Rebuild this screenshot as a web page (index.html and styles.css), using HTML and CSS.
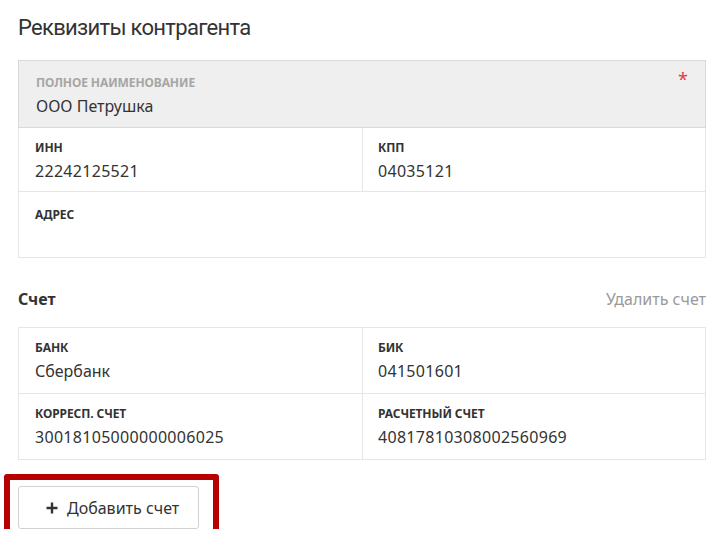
FILE: index.html
```html
<!DOCTYPE html>
<html lang="ru">
<head>
<meta charset="utf-8">
<link rel="stylesheet" href="styles.css">
</head>
<body>
<div class="page">
  <h1 class="title">Реквизиты контрагента</h1>

  <div class="card">
    <div class="row row-gray">
      <div class="cell">
        <div class="label label-muted">Полное наименование</div>
        <div class="value">ООО Петрушка</div>
      </div>
      <span class="req">*</span>
    </div>
    <div class="row row-split row-short">
      <div class="cell">
        <div class="label">ИНН</div>
        <div class="value num">22242125521</div>
      </div>
      <div class="cell">
        <div class="label">КПП</div>
        <div class="value num">04035121</div>
      </div>
    </div>
    <div class="row row-address">
      <div class="cell">
        <div class="label">Адрес</div>
        <div class="value">&nbsp;</div>
      </div>
    </div>
  </div>

  <div class="section-head">
    <span class="section-title">Счет</span>
    <span class="section-link">Удалить счет</span>
  </div>

  <div class="card">
    <div class="row row-split">
      <div class="cell">
        <div class="label">Банк</div>
        <div class="value">Сбербанк</div>
      </div>
      <div class="cell">
        <div class="label">БИК</div>
        <div class="value num">041501601</div>
      </div>
    </div>
    <div class="row row-split">
      <div class="cell">
        <div class="label">Корресп. счет</div>
        <div class="value num">30018105000000006025</div>
      </div>
      <div class="cell">
        <div class="label">Расчетный счет</div>
        <div class="value num">40817810308002560969</div>
      </div>
    </div>
  </div>

  <div class="btn-wrap">
    <button class="btn" type="button">
      <svg class="plus" width="12" height="12" viewBox="0 0 12 12"><path d="M6 0.5V11.5M0.5 6H11.5" stroke="#333" stroke-width="2.4" fill="none"/></svg>
      <span>Добавить счет</span>
    </button>
    <div class="highlight"></div>
  </div>
</div>
</body>
</html>
```

FILE: styles.css
```css
* { box-sizing: border-box; }
html, body { margin: 0; padding: 0; background: #fff; }
body {
  font-family: "Noto Sans", "Open Sans", "DejaVu Sans", sans-serif;
  color: #333;
}
.page {
  width: 718px;
  padding: 13px 12px 0 18px;
}
.title {
  margin: 0;
  font-family: Roboto, "Noto Sans", sans-serif;
  font-size: 22px;
  font-weight: 400;
  line-height: 30px;
  letter-spacing: -0.7px;
  color: #333;
}
.card {
  margin-top: 17px;
  border: 1px solid #e6e6e6;
  border-bottom: none;
}
.row {
  position: relative;
  display: flex;
  border-bottom: 1px solid #e6e6e6;
  min-height: 66px;
}
.row-short { min-height: 64px; }
.row-gray {
  background: #efefef;
  margin: -1px -1px 0 -1px;
  border: 1px solid #d9d9d9;
  min-height: 68px;
}
.row-gray .cell { padding-left: 17px; padding-top: 14px; }
.row-address .cell { padding-top: 15px; }
.row-split .cell { flex: 1 1 0; }
.row-split .cell + .cell { border-left: 1px solid #e6e6e6; padding-left: 15px; }
.cell {
  padding: 12px 16px 0 16px;
}
.label {
  font-size: 12px;
  line-height: 16px;
  font-weight: 700;
  text-transform: uppercase;
  color: #333;
  letter-spacing: -0.1px;
}
.label-muted { color: #a6a6a6; }
.value {
  margin-top: 4px;
  font-size: 16px;
  line-height: 22px;
  color: #333;
}
.num { letter-spacing: 0.3px; }
.req {
  position: absolute;
  right: 17px;
  top: 7px;
  color: #e04040;
  font-size: 18px;
  line-height: 22px;
}
.section-head {
  display: flex;
  justify-content: space-between;
  align-items: baseline;
  margin-top: 29px;
  line-height: 24px;
}
.section-title { font-size: 16px; font-weight: 700; color: #333; }
.section-link { font-size: 16px; color: #9a9a9a; }
.section-head + .card { margin-top: 16px; }
.btn-wrap {
  position: relative;
  margin-top: 26px;
  width: 181px;
}
.btn {
  display: flex;
  align-items: center;
  gap: 9px;
  width: 181px;
  height: 43px;
  padding: 0 0 0 27px;
  border: 1px solid #d2d2d2;
  border-radius: 3px;
  background: #fff;
  font-family: inherit;
  font-size: 16px;
  color: #333;
}
.plus { flex: none; }
.highlight {
  position: absolute;
  left: -14px;
  top: -12px;
  width: 215px;
  height: 64px;
  border: 6px solid #b70000;
  border-radius: 3px;
  pointer-events: none;
}
```
